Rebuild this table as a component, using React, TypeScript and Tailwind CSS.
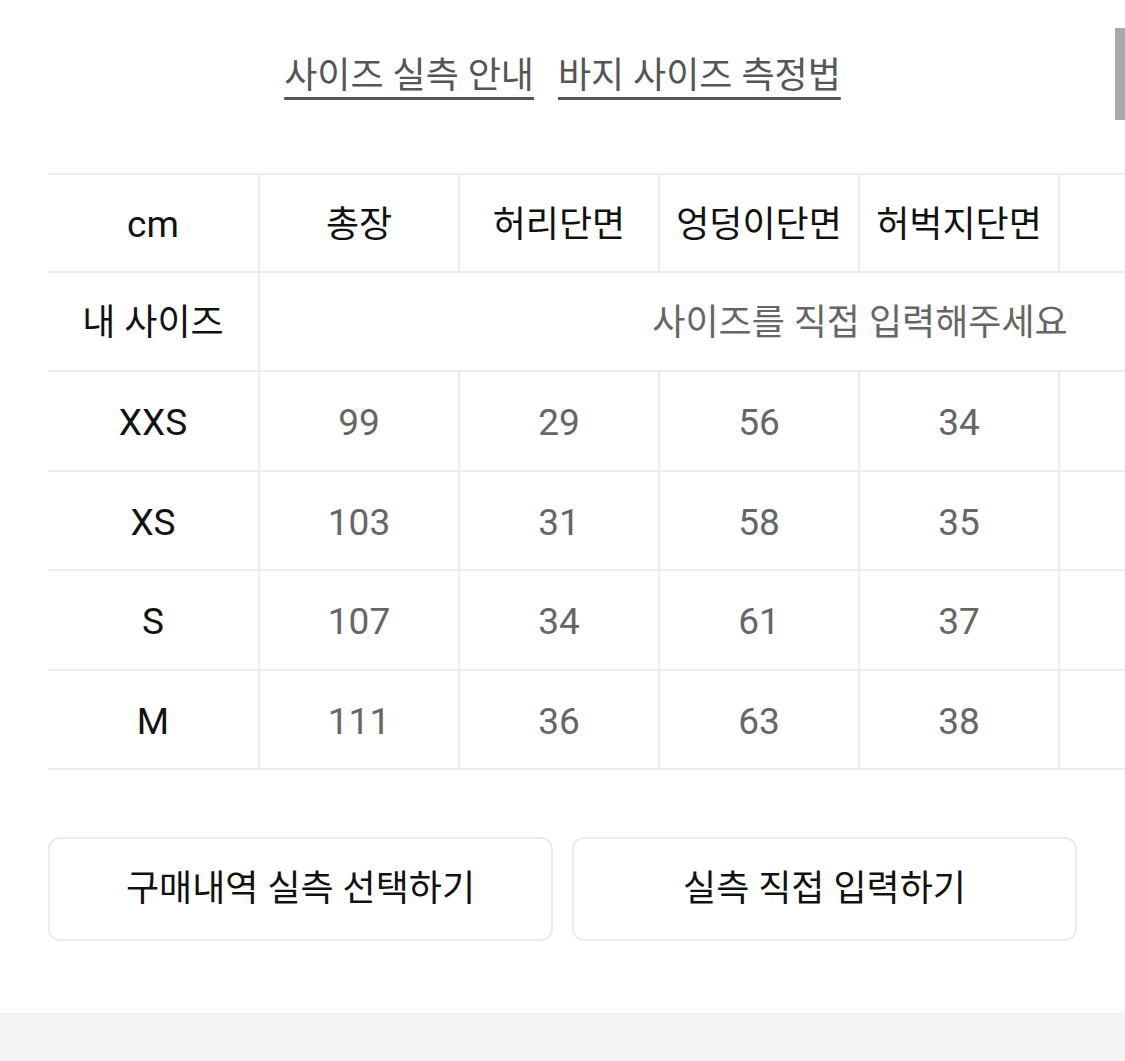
const FONT = "font-['Roboto','Noto_Sans_CJK_KR',sans-serif]";

const columns = ["총장", "허리단면", "엉덩이단면", "허벅지단면", "밑위", "밑단"];

const sizes = [
  { label: "XXS", values: ["99", "29", "56", "34", "25", "17"] },
  { label: "XS", values: ["103", "31", "58", "35", "26", "18"] },
  { label: "S", values: ["107", "34", "61", "37", "27", "19"] },
  { label: "M", values: ["111", "36", "63", "38", "28", "20"] },
];

function Row({ children, first }: { children: React.ReactNode; first?: boolean }) {
  return (
    <div className={`flex h-[99.5px] border-b-2 border-[#ececec] ${first ? "border-t-2" : ""}`}>
      {children}
    </div>
  );
}

function Cell({ children, head }: { children: React.ReactNode; head?: boolean }) {
  return (
    <div
      className={`flex w-[200px] shrink-0 items-center justify-center border-r-2 border-[#ececec] pt-1 ${
        head ? "text-[36px] text-[#111]" : "text-[37px] text-[#666]"
      }`}
    >
      {children}
    </div>
  );
}

function LabelCell({ children, latin }: { children: React.ReactNode; latin?: boolean }) {
  return (
    <div
      className={`flex w-[212px] shrink-0 items-center justify-center border-r-2 border-[#ececec] pt-1 text-[#111] ${
        latin ? "text-[37px]" : "text-[36px]"
      }`}
    >
      {children}
    </div>
  );
}

export default function App() {
  return (
    <div className={`relative min-h-[1061px] overflow-hidden bg-white ${FONT}`}>
      <div className="flex justify-center gap-6 pt-[49px] text-[36px] text-[#555]">
        <a className="underline decoration-[3px] underline-offset-[9px]">사이즈 실측 안내</a>
        <a className="underline decoration-[3px] underline-offset-[9px]">바지 사이즈 측정법</a>
      </div>

      <div className="mt-[70px] overflow-hidden pl-12">
        <div className="w-[1412px]">
          <Row first>
            <LabelCell latin>cm</LabelCell>
            {columns.map((c) => (
              <Cell key={c} head>
                {c}
              </Cell>
            ))}
          </Row>
          <Row>
            <LabelCell>내 사이즈</LabelCell>
            <div className="flex flex-1 items-center justify-center pt-1 text-[36px] text-[#666]">
              사이즈를 직접 입력해주세요
            </div>
          </Row>
          {sizes.map((s) => (
            <Row key={s.label}>
              <LabelCell latin>{s.label}</LabelCell>
              {s.values.map((v, i) => (
                <Cell key={i}>{v}</Cell>
              ))}
            </Row>
          ))}
        </div>
      </div>

      <div className="mt-[67px] flex gap-[19px] px-12">
        <button className="h-[104px] flex-1 rounded-[12px] border-2 border-[#ececec] bg-white text-[36px] text-[#111]">
          구매내역 실측 선택하기
        </button>
        <button className="h-[104px] flex-1 rounded-[12px] border-2 border-[#ececec] bg-white text-[36px] text-[#111]">
          실측 직접 입력하기
        </button>
      </div>

      <div className="mt-[72px] h-[49px] border-t border-[#ededed] bg-[#f4f4f4]" />

      <div className="absolute right-0 top-[28px] h-[92px] w-[10px] bg-[#aaaaaa]" />
    </div>
  );
}
